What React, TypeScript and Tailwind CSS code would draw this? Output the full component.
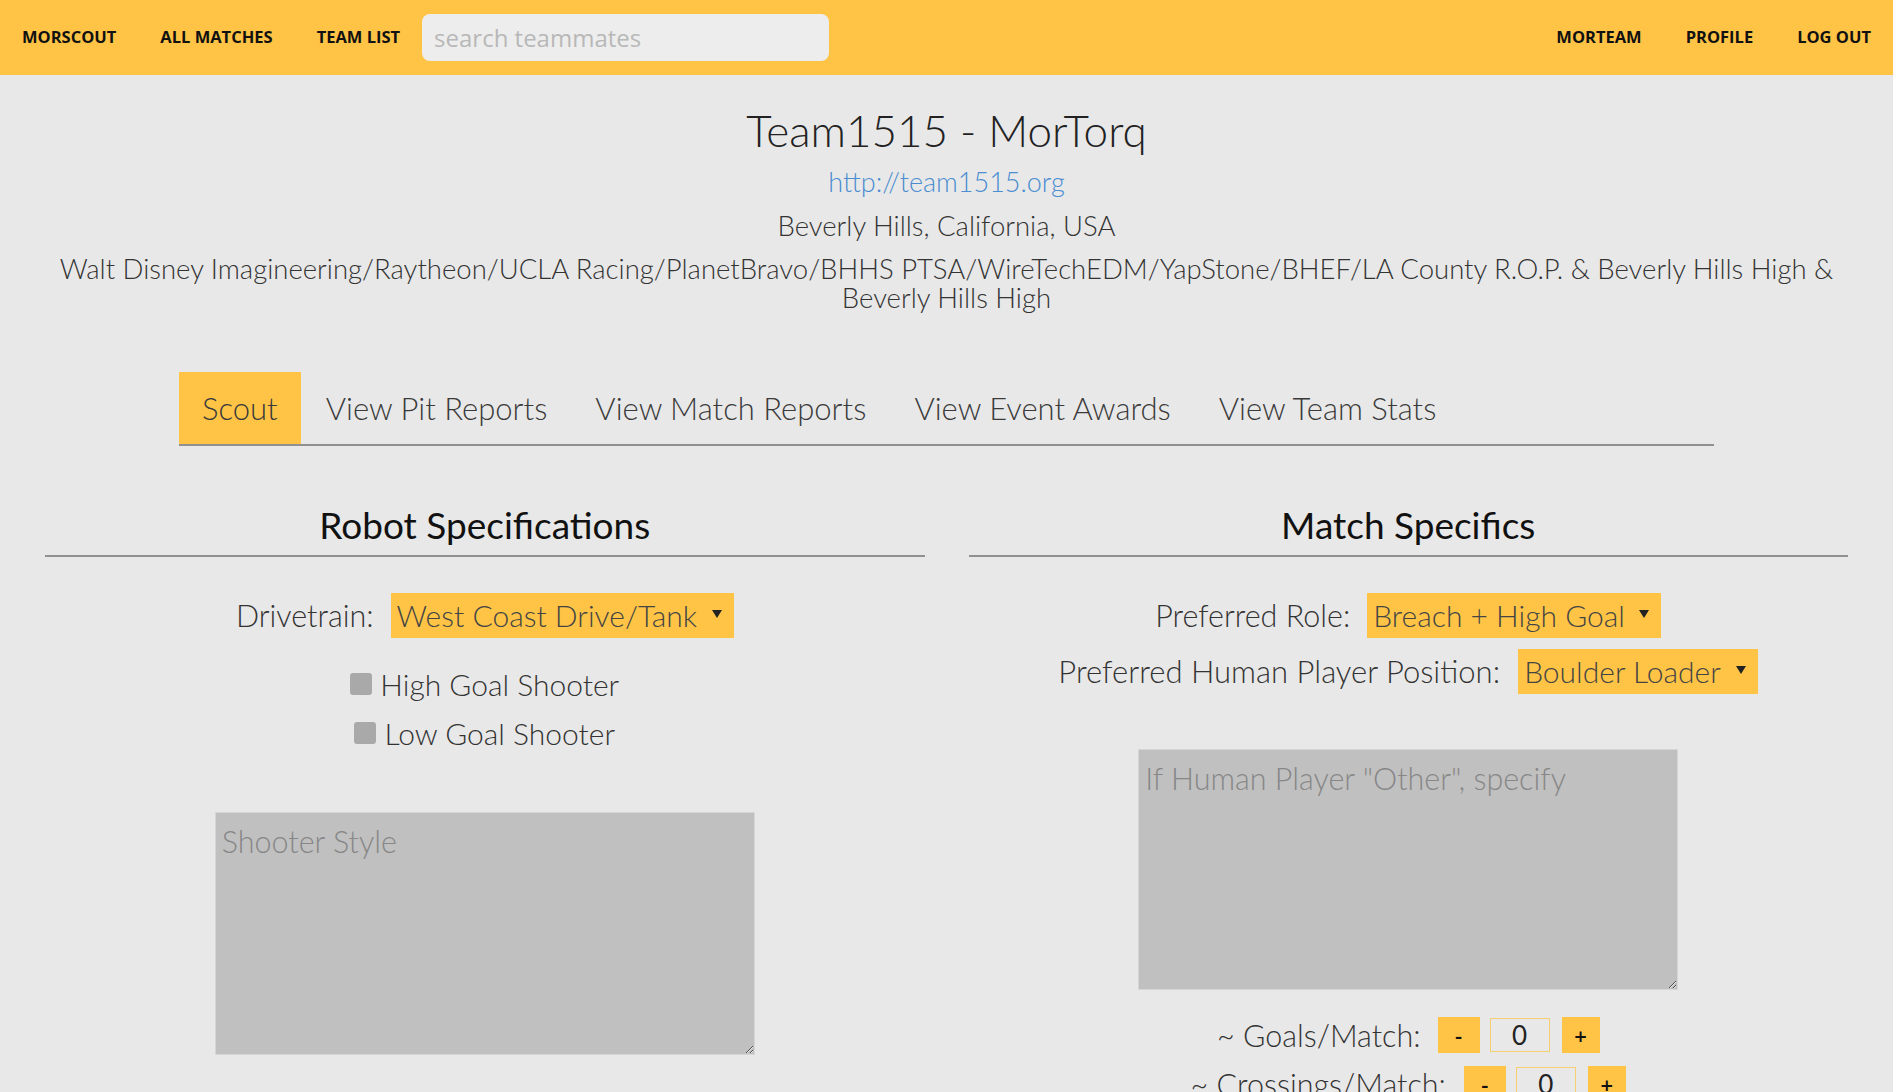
import { useState } from "react";

const navLeft = ["MORSCOUT", "ALL MATCHES", "TEAM LIST"];
const navRight = ["MORTEAM", "PROFILE", "LOG OUT"];
const tabs = ["Scout", "View Pit Reports", "View Match Reports", "View Event Awards", "View Team Stats"];

const Arrow = () => (
  <svg width="10" height="8" viewBox="0 0 10 8" className="pointer-events-none absolute right-[12px] top-[17px]">
    <path d="M0 0 L10 0 L5 8 Z" fill="#222" />
  </svg>
);

const Select = ({ value }: { value: string }) => (
  <div className="relative inline-block">
    <select
      defaultValue={value}
      className="h-[45px] appearance-none bg-[#ffc446] pl-[6px] pr-[36px] text-[30px] font-light leading-[45px] text-[#444] outline-none"
    >
      <option>{value}</option>
    </select>
    <Arrow />
  </div>
);

const Check = ({ label }: { label: string }) => (
  <label className="flex h-[40px] items-center gap-[8px] text-[30px] font-light leading-[40px] text-[#333]">
    <span className="inline-block h-[22px] w-[22px] rounded-[3px] bg-[#a9a9a9]" />
    {label}
  </label>
);

const Counter = ({ label, gap }: { label: string; gap: string }) => {
  const [n, setN] = useState(0);
  return (
    <div className="flex items-center justify-center">
      <span className={`text-[30.5px] font-light leading-[36px] text-[#333] ${gap}`}>{label}</span>
      <button
        onClick={() => setN((v) => Math.max(0, v - 1))}
        className="h-[36px] w-[42px] bg-[#ffc446] font-['Open_Sans'] text-[22px] font-semibold text-[#111]"
      >
        -
      </button>
      <input
        value={n}
        readOnly
        className="ml-[10px] h-[34px] w-[60px] border border-[#f5cf72] bg-[#e8e8e8] text-center text-[26px] text-[#222] outline-none"
      />
      <button
        onClick={() => setN((v) => v + 1)}
        className="ml-[12px] h-[36px] w-[38px] bg-[#ffc446] font-['Open_Sans'] text-[22px] font-semibold text-[#111]"
      >
        +
      </button>
    </div>
  );
};

export default function App() {
  const [tab, setTab] = useState(0);

  return (
    <div className="min-h-screen bg-[#e8e8e8] font-['Lato',sans-serif] text-[#333]">
      {/* Nav */}
      <header className="flex h-[75px] items-center bg-[#ffc446] font-['Open_Sans',sans-serif] text-[16.5px] font-bold text-[#111]">
        {navLeft.map((l) => (
          <a key={l} className="px-[22px]">{l}</a>
        ))}
        <input
          placeholder="search teammates"
          className="h-[47px] w-[407px] rounded-[8px] bg-[#ededed] px-[12px] text-[24px] font-normal text-[#333] outline-none placeholder:text-[#b8b8b8]"
        />
        <div className="ml-auto flex">
          {navRight.map((l) => (
            <a key={l} className="px-[22px]">{l}</a>
          ))}
        </div>
      </header>

      {/* Team info */}
      <div className="flex flex-col items-center pt-[29px] text-center font-light">
        <h1 className="text-[44px] leading-[52px] text-[#222]">Team1515 - MorTorq</h1>
        <a className="mt-[11px] text-[27px] leading-[30px] text-[#4a8dd0]">http://team1515.org</a>
        <p className="mt-[14px] text-[27.5px] leading-[30px] text-[#333]">Beverly Hills, California, USA</p>
        <p className="mt-[13px] px-[20px] text-[27.5px] leading-[29px] text-[#333]">
          Walt Disney Imagineering/Raytheon/UCLA Racing/PlanetBravo/BHHS PTSA/WireTechEDM/YapStone/BHEF/LA County R.O.P. &amp; Beverly Hills High &amp;
          <br />
          Beverly Hills High
        </p>
      </div>

      {/* Tabs */}
      <div className="mx-[179px] mt-[60px] flex border-b-2 border-[#909090]">
        {tabs.map((t, i) => (
          <button
            key={t}
            onClick={() => setTab(i)}
            className={`h-[72px] px-[23px] text-[31px] font-light text-[#3a3a3a] ${i === tab ? "bg-[#ffc446]" : ""} ${i === 0 ? "" : "ml-[2px]"}`}
          >
            {t}
          </button>
        ))}
      </div>

      {/* Form */}
      <div className="grid grid-cols-2 gap-[44px] px-[45px] pb-[80px] pt-[57px]">
        <section className="flex flex-col items-center">
          <h2 className="w-full border-b-2 border-[#909090] pb-[8px] text-center text-[37px] leading-[44px] text-[#111]">
            Robot Specifications
          </h2>
          <div className="mt-[36px] flex h-[45px] items-center gap-[17px]">
            <span className="text-[30.5px] font-light text-[#333]">Drivetrain:</span>
            <Select value="West Coast Drive/Tank" />
          </div>
          <div className="mt-[26px] flex flex-col items-center gap-[9px]">
            <Check label="High Goal Shooter" />
            <Check label="Low Goal Shooter" />
          </div>
          <textarea
            placeholder="Shooter Style"
            className="mt-[59px] h-[243px] w-[540px] border border-[#d6d6d6] bg-[#c0c0c0] px-[6px] py-[6px] text-[30.5px] font-light text-[#333] outline-none placeholder:text-[#878787]"
          />
        </section>

        <section className="flex flex-col items-center">
          <h2 className="w-full border-b-2 border-[#909090] pb-[8px] text-center text-[37px] leading-[44px] text-[#111]">
            Match Specifics
          </h2>
          <div className="mt-[36px] flex h-[45px] items-center gap-[17px]">
            <span className="text-[30.5px] font-light text-[#333]">Preferred Role:</span>
            <Select value="Breach + High Goal" />
          </div>
          <div className="mt-[11px] flex h-[45px] items-center gap-[18px]">
            <span className="text-[31px] font-light text-[#333]">Preferred Human Player Position:</span>
            <Select value="Boulder Loader" />
          </div>
          <textarea
            placeholder='If Human Player "Other", specify'
            className="mt-[55px] h-[241px] w-[540px] border border-[#d6d6d6] bg-[#c0c0c0] px-[6px] py-[6px] text-[30.5px] font-light text-[#333] outline-none placeholder:text-[#878787]"
          />
          <div className="mt-[27px] flex flex-col gap-[13px]">
            <Counter label="~ Goals/Match:" gap="mr-[17px]" />
            <Counter label="~ Crossings/Match:" gap="mr-[18px]" />
          </div>
        </section>
      </div>
    </div>
  );
}
